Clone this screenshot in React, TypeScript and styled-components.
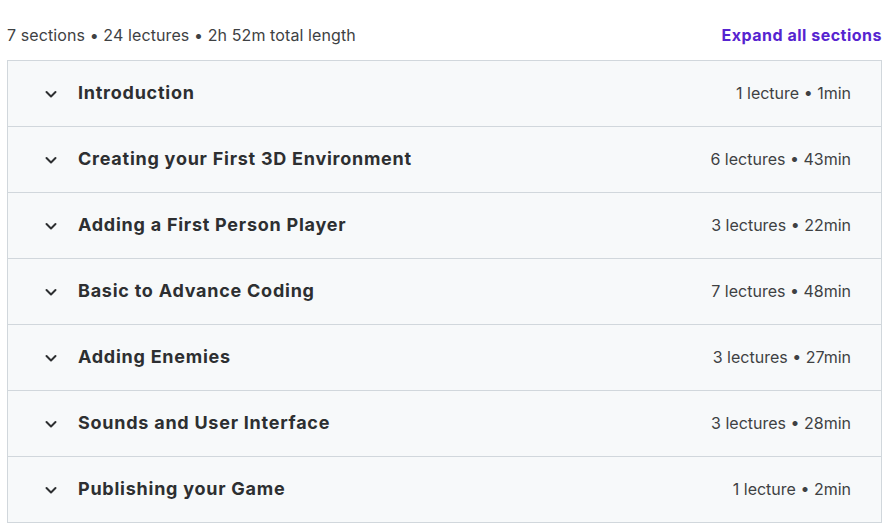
import styled, { createGlobalStyle } from "styled-components";

const GlobalStyle = createGlobalStyle`
  body {
    margin: 0;
    background: #ffffff;
    font-family: "Inter", "Noto Sans", sans-serif;
    color: #2d2f31;
  }
`;

const Page = styled.div`
  padding: 20px 6px 0 7px;
  width: 888px;
  box-sizing: border-box;
`;

const Header = styled.div`
  display: flex;
  justify-content: space-between;
  align-items: center;
  height: 30px;
  margin-bottom: 10px;
`;

const Summary = styled.span`
  font-size: 16px;
  letter-spacing: 0.1px;
  color: #3e4143;
`;

const ExpandLink = styled.button`
  border: none;
  background: none;
  padding: 0;
  font-family: inherit;
  font-size: 16px;
  font-weight: 700;
  letter-spacing: 0.5px;
  color: #5624d0;
  cursor: pointer;
`;

const List = styled.div`
  border: 1px solid #d1d7dc;
  border-bottom: none;
`;

const Row = styled.div`
  display: flex;
  align-items: center;
  height: 65px;
  padding: 0 30px 0 35px;
  background: #f7f9fa;
  border-bottom: 1px solid #d1d7dc;
`;

const Chevron = styled.span`
  display: flex;
  width: 16px;
  margin-right: 19px;
  color: #2d2f31;
`;

const Title = styled.span`
  flex: 1;
  font-size: 18px;
  font-weight: 700;
  letter-spacing: 0.75px;
  color: #2d2f31;
  margin-top: -2px;
`;

const Meta = styled.span`
  font-size: 16px;
  color: #3e4143;
  margin-top: -2px;
`;

const sections = [
  { title: "Introduction", meta: "1 lecture • 1min" },
  { title: "Creating your First 3D Environment", meta: "6 lectures • 43min" },
  { title: "Adding a First Person Player", meta: "3 lectures • 22min" },
  { title: "Basic to Advance Coding", meta: "7 lectures • 48min" },
  { title: "Adding Enemies", meta: "3 lectures • 27min" },
  { title: "Sounds and User Interface", meta: "3 lectures • 28min" },
  { title: "Publishing your Game", meta: "1 lecture • 2min" },
];

function ChevronIcon() {
  return (
    <svg width="16" height="16" viewBox="0 0 16 16" fill="none">
      <path
        d="M3.5 6 L8 10.5 L12.5 6"
        stroke="currentColor"
        strokeWidth="2"
        strokeLinecap="round"
        strokeLinejoin="round"
      />
    </svg>
  );
}

export default function App() {
  return (
    <Page>
      <GlobalStyle />
      <Header>
        <Summary>7 sections • 24 lectures • 2h 52m total length</Summary>
        <ExpandLink>Expand all sections</ExpandLink>
      </Header>
      <List>
        {sections.map((s) => (
          <Row key={s.title}>
            <Chevron>
              <ChevronIcon />
            </Chevron>
            <Title>{s.title}</Title>
            <Meta>{s.meta}</Meta>
          </Row>
        ))}
      </List>
    </Page>
  );
}
